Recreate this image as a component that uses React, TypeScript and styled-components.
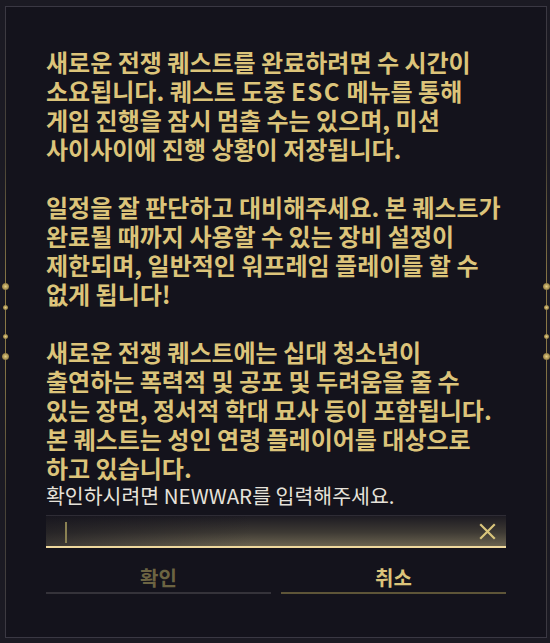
import React, { useState } from "react";
import styled, { createGlobalStyle } from "styled-components";

const GlobalStyle = createGlobalStyle`
	html, body {
		margin: 0;
		padding: 0;
		background: #1b1a23;
	}
	body {
		font-family: "Noto Sans CJK KR", "Noto Sans", sans-serif;
	}
`;

const Page = styled.div`
	width: 550px;
	height: 643px;
	padding: 6px 3px 5px 5px;
	box-sizing: border-box;
	background: #1b1a23;
`;

const Frame = styled.section`
	position: relative;
	height: 100%;
	box-sizing: border-box;
	background: #14131c;
	border: 1px solid transparent;
	border-image: linear-gradient(
			180deg,
			#3a3843 0%,
			#4a4436 25%,
			#8a7846 45%,
			#8a7846 55%,
			#4a4436 78%,
			#3a3843 100%
		)
		1;
	padding: 40px 40px 0 40px;
	display: flex;
	flex-direction: column;
`;

const Stud = styled.span<{ $top: number; $side: "left" | "right"; $big?: boolean }>`
	position: absolute;
	top: ${(p) => p.$top}px;
	${(p) => p.$side}: ${(p) => (p.$big ? -4 : -3)}px;
	width: ${(p) => (p.$big ? 7 : 5)}px;
	height: ${(p) => (p.$big ? 7 : 5)}px;
	border-radius: 50%;
	background: radial-gradient(circle, #e6cf86 0%, #a08a4c 60%, rgba(160, 138, 76, 0) 100%);
`;

const Body = styled.div`
	color: #dcc47a;
	font-size: 24px;
	font-weight: 700;
	line-height: 29px;
	letter-spacing: 0;
	white-space: nowrap;
`;

const Latin = styled.span`
	letter-spacing: 1.5px;
`;

const Para = styled.p`
	margin: 0 0 29px 0;
	&:last-child {
		margin-bottom: 0;
	}
`;

const Hint = styled.div`
	color: #e6e2da;
	font-size: 20.5px;
	font-weight: 400;
	line-height: 26px;
	letter-spacing: 0;
	white-space: nowrap;
`;

const InputBox = styled.div`
	position: relative;
	margin-top: 7px;
	height: 33px;
	box-sizing: border-box;
	border-top: 1px solid #2e2c35;
	border-bottom: 2px solid #efd99e;
	background: linear-gradient(180deg, #1d1b22 0%, #3e3a34 55%, #6a6350 100%);
	display: flex;
	align-items: center;
	padding: 0 9px 0 16px;
	overflow: hidden;

	&::before {
		content: "";
		position: absolute;
		inset: 0;
		background: linear-gradient(90deg, rgba(20, 19, 28, 0.55) 0%, rgba(20, 19, 28, 0) 45%);
		pointer-events: none;
	}
`;

const Field = styled.input`
	position: relative;
	flex: 1;
	height: 100%;
	background: transparent;
	border: none;
	outline: none;
	color: #e6e2da;
	font-family: inherit;
	font-size: 18px;
	padding: 0;
	caret-color: #8c8455;
`;

const Caret = styled.span`
	position: absolute;
	left: 19px;
	top: 6px;
	width: 2px;
	height: 21px;
	background: #8a8152;
`;

const Clear = styled.button`
	position: relative;
	background: none;
	border: none;
	padding: 0;
	width: 20px;
	height: 20px;
	display: flex;
	align-items: center;
	justify-content: center;
	cursor: pointer;
`;

const Actions = styled.div`
	display: grid;
	grid-template-columns: 1fr 1fr;
	gap: 10px;
`;

const ActionButton = styled.button<{ $disabled?: boolean }>`
	box-sizing: border-box;
	background: none;
	border: none;
	border-bottom: 2px solid ${(p) => (p.$disabled ? "#35333a" : "#5e5538")};
	height: 46px;
	padding: 16px 0 0 0;
	font-family: inherit;
	font-size: 20px;
	line-height: 28px;
	font-weight: 700;
	color: ${(p) => (p.$disabled ? "#6c6442" : "#dcc47a")};
	cursor: ${(p) => (p.$disabled ? "default" : "pointer")};
`;

// gold studs on the side rails: [top, big]
const studs: [number, boolean][] = [
	[276, true],
	[298, false],
	[327, false],
	[346, true],
];

function App() {
	const [value, setValue] = useState("");

	return (
		<Page>
			<GlobalStyle />
			<Frame>
				{studs.map(([top, big]) => (
					<React.Fragment key={top}>
						<Stud $top={top} $side="left" $big={big} />
						<Stud $top={top} $side="right" $big={big} />
					</React.Fragment>
				))}
				<Body>
					<Para>
						새로운 전쟁 퀘스트를 완료하려면 수 시간이
						<br />
						소요됩니다. 퀘스트 도중 <Latin>ESC</Latin> 메뉴를 통해
						<br />
						게임 진행을 잠시 멈출 수는 있으며, 미션
						<br />
						사이사이에 진행 상황이 저장됩니다.
					</Para>
					<Para>
						일정을 잘 판단하고 대비해주세요. 본 퀘스트가
						<br />
						완료될 때까지 사용할 수 있는 장비 설정이
						<br />
						제한되며, 일반적인 워프레임 플레이를 할 수
						<br />
						없게 됩니다!
					</Para>
					<Para>
						새로운 전쟁 퀘스트에는 십대 청소년이
						<br />
						출연하는 폭력적 및 공포 및 두려움을 줄 수
						<br />
						있는 장면, 정서적 학대 묘사 등이 포함됩니다.
						<br />
						본 퀘스트는 성인 연령 플레이어를 대상으로
						<br />
						하고 있습니다.
					</Para>
				</Body>
				<Hint>확인하시려면 NEWWAR를 입력해주세요.</Hint>
				<InputBox>
					{value.length === 0 && <Caret />}
					<Field value={value} onChange={(e) => setValue(e.target.value)} />
					<Clear onClick={() => setValue("")} aria-label="clear">
						<svg width="17" height="17" viewBox="0 0 17 17">
							<path d="M2 2 L15 15 M15 2 L2 15" stroke="#d9c57c" strokeWidth="2.2" strokeLinecap="square" />
						</svg>
					</Clear>
				</InputBox>
				<Actions>
					<ActionButton $disabled>확인</ActionButton>
					<ActionButton>취소</ActionButton>
				</Actions>
			</Frame>
		</Page>
	);
}

export default App;
